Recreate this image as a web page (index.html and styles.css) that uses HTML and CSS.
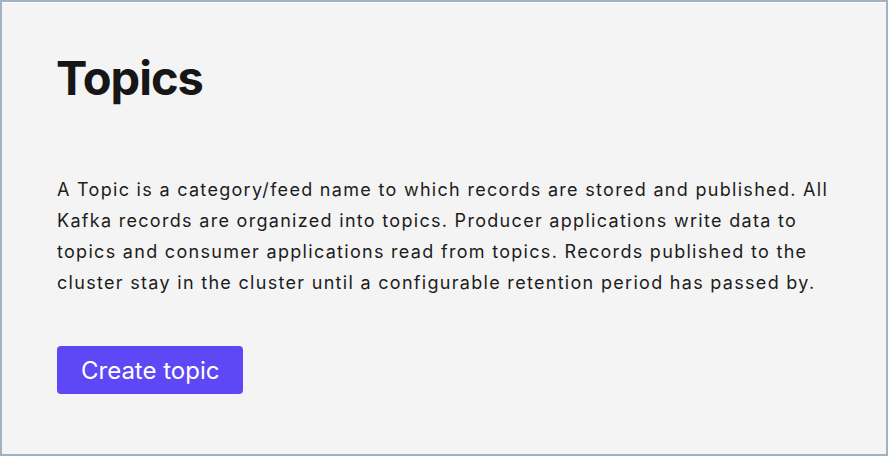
FILE: index.html
```html
<!DOCTYPE html>
<html lang="en">
<head>
<meta charset="utf-8">
<title>Topics</title>
<link rel="stylesheet" href="styles.css">
</head>
<body>
<main class="frame">
  <section class="intro">
    <h1 class="title">Topics</h1>
    <p class="desc">A Topic is a category/feed name to which records are stored and published. All Kafka records are organized into topics. Producer applications write data to topics and consumer applications read from topics. Records published to the cluster stay in the cluster until a configurable retention period has passed by.</p>
    <button class="btn-primary" type="button">Create topic</button>
  </section>
</main>
</body>
</html>
```

FILE: styles.css
```css
* { box-sizing: border-box; }
html, body { margin: 0; padding: 0; }
body {
  width: 888px;
  height: 456px;
  font-family: Inter, "Noto Sans", sans-serif;
  color: #161616;
  background: #f4f4f4;
}
.frame {
  width: 888px;
  height: 456px;
  border: 2px solid #a0b1c1;
  box-shadow: inset 0 1px 0 #ffffff;
  background: #f4f4f4;
}
.intro {
  padding: 46px 54px 0 55px;
  display: flex;
  flex-direction: column;
  align-items: flex-start;
}
.title {
  margin: 0 0 0 -1px;
  font-size: 47px;
  font-weight: 700;
  line-height: 60px;
  letter-spacing: -1px;
}
.desc {
  margin: 66px 0 0;
  font-size: 18px;
  line-height: 31px;
  letter-spacing: 1.3px;
  width: 790px;
  color: #1c1c1c;
}
.btn-primary {
  margin-top: 48px;
  height: 48px;
  padding: 0 24px;
  border: 0;
  border-radius: 4px;
  background: #5e48f5;
  color: #ffffff;
  font-family: Inter, "Noto Sans", sans-serif;
  font-size: 24px;
  cursor: pointer;
}
```
